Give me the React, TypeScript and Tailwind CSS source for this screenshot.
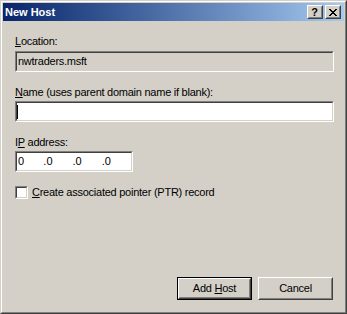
const sunkenOuter = "border border-t-[#808080] border-l-[#808080] border-b-white border-r-white"
const sunkenInner = "border border-t-[#404040] border-l-[#404040] border-b-[#d4d0c8] border-r-[#d4d0c8]"

function Label({ children }: { children: React.ReactNode }) {
  return <div className="h-[13px] leading-[13px]">{children}</div>
}

function TitleButton({ children }: { children: React.ReactNode }) {
  return (
    <div className="w-[16px] h-[14px] bg-[#d4d0c8] border border-t-white border-l-white border-b-[#404040] border-r-[#404040]">
      <div className="w-full h-full border border-t-[#d4d0c8] border-l-[#d4d0c8] border-b-[#808080] border-r-[#808080] flex items-center justify-center">
        {children}
      </div>
    </div>
  )
}

function CloseGlyph() {
  const rows = ["xx....xx", ".xx..xx.", "..xxxx..", "...xx...", "..xxxx..", ".xx..xx.", "xx....xx"]
  return (
    <svg width="8" height="7" viewBox="0 0 8 7" shapeRendering="crispEdges" className="-ml-[1px]">
      {rows.map((row, y) =>
        row.split("").map((c, x) => (c === "x" ? <rect key={`${x}-${y}`} x={x} y={y} width="1" height="1" fill="#000" /> : null))
      )}
    </svg>
  )
}

function PushButton({ children, isDefault }: { children: React.ReactNode; isDefault?: boolean }) {
  if (isDefault) {
    return (
      <div className="w-[75px] h-[23px] border border-black">
        <div className="w-full h-full border border-t-white border-l-white border-b-[#404040] border-r-[#404040]">
          <div className="w-full h-full border border-t-[#d4d0c8] border-l-[#d4d0c8] border-b-[#808080] border-r-[#808080] flex items-center justify-center leading-[13px]">
            {children}
          </div>
        </div>
      </div>
    )
  }
  return (
    <div className="w-[75px] h-[23px] border border-t-white border-l-white border-b-[#404040] border-r-[#404040]">
      <div className="w-full h-full border border-t-[#d4d0c8] border-l-[#d4d0c8] border-b-[#808080] border-r-[#808080] flex items-center justify-center leading-[13px]">
        {children}
      </div>
    </div>
  )
}

export default function App() {
  return (
    <div className="w-[347px] h-[314px] bg-[#d4d0c8] text-black text-[11px] tracking-[-0.25px] font-['Liberation_Sans',Arial,sans-serif] border border-t-[#d4d0c8] border-l-[#d4d0c8] border-b-[#404040] border-r-[#404040]">
      <div className="w-full h-full border border-t-white border-l-white border-b-[#808080] border-r-[#808080] p-[1px] flex flex-col">
        {/* title bar */}
        <div className="h-[18px] shrink-0 flex items-center bg-gradient-to-r from-[#0a246a] to-[#a6caf0] pl-[2px] pr-[3px]">
          <span className="flex-1 text-white font-bold tracking-normal leading-[18px]">New Host</span>
          <div className="flex gap-[2px]">
            <TitleButton>
              <span className="font-bold text-[11px] leading-[10px] tracking-normal -ml-[1px]">?</span>
            </TitleButton>
            <TitleButton>
              <CloseGlyph />
            </TitleButton>
          </div>
        </div>

        {/* body */}
        <div className="flex-1 flex flex-col pl-[12px] pr-[10px] pb-[11px]">
          <div className="mt-[14px]">
            <Label>
              <span className="underline underline-offset-[1px]">L</span>ocation:
            </Label>
          </div>
          <div className={`mt-[3px] w-[319px] h-[21px] ${sunkenOuter}`}>
            <div className={`w-full h-full bg-[#d4d0c8] flex items-center pl-[1px] ${sunkenInner}`}>nwtraders.msft</div>
          </div>

          <div className="mt-[14px]">
            <Label>
              <span className="underline underline-offset-[1px]">N</span>ame (uses parent domain name if blank):
            </Label>
          </div>
          <div className={`mt-[2px] w-[319px] h-[21px] ${sunkenOuter}`}>
            <div className={`w-full h-full bg-white flex items-center ${sunkenInner}`}>
              <div className="w-[1px] h-[14px] bg-black" />
            </div>
          </div>

          <div className="mt-[14px]">
            <Label>
              I<span className="underline underline-offset-[1px]">P</span> address:
            </Label>
          </div>
          <div className={`mt-[2px] w-[118px] h-[21px] ${sunkenOuter}`}>
            <div className={`w-full h-full bg-white flex items-center pl-[1px] tracking-normal ${sunkenInner}`}>
              <span className="w-[26px]">0</span>
              <span className="w-[30px]">.0</span>
              <span className="w-[30px]">.0</span>
              <span className="w-[30px]">.0</span>
            </div>
          </div>

          <div className="mt-[14px] h-[13px] flex items-center">
            <div className={`w-[13px] h-[13px] ${sunkenOuter}`}>
              <div className={`w-full h-full bg-white ${sunkenInner}`} />
            </div>
            <span className="ml-[4px] leading-[13px]">
              <span className="underline underline-offset-[1px]">C</span>reate associated pointer (PTR) record
            </span>
          </div>

          <div className="flex-1" />

          <div className="flex justify-end gap-[6px] pr-[1px]">
            <PushButton isDefault>
              <span>
                Add <span className="underline underline-offset-[1px]">H</span>ost
              </span>
            </PushButton>
            <PushButton>Cancel</PushButton>
          </div>
        </div>
      </div>
    </div>
  )
}
